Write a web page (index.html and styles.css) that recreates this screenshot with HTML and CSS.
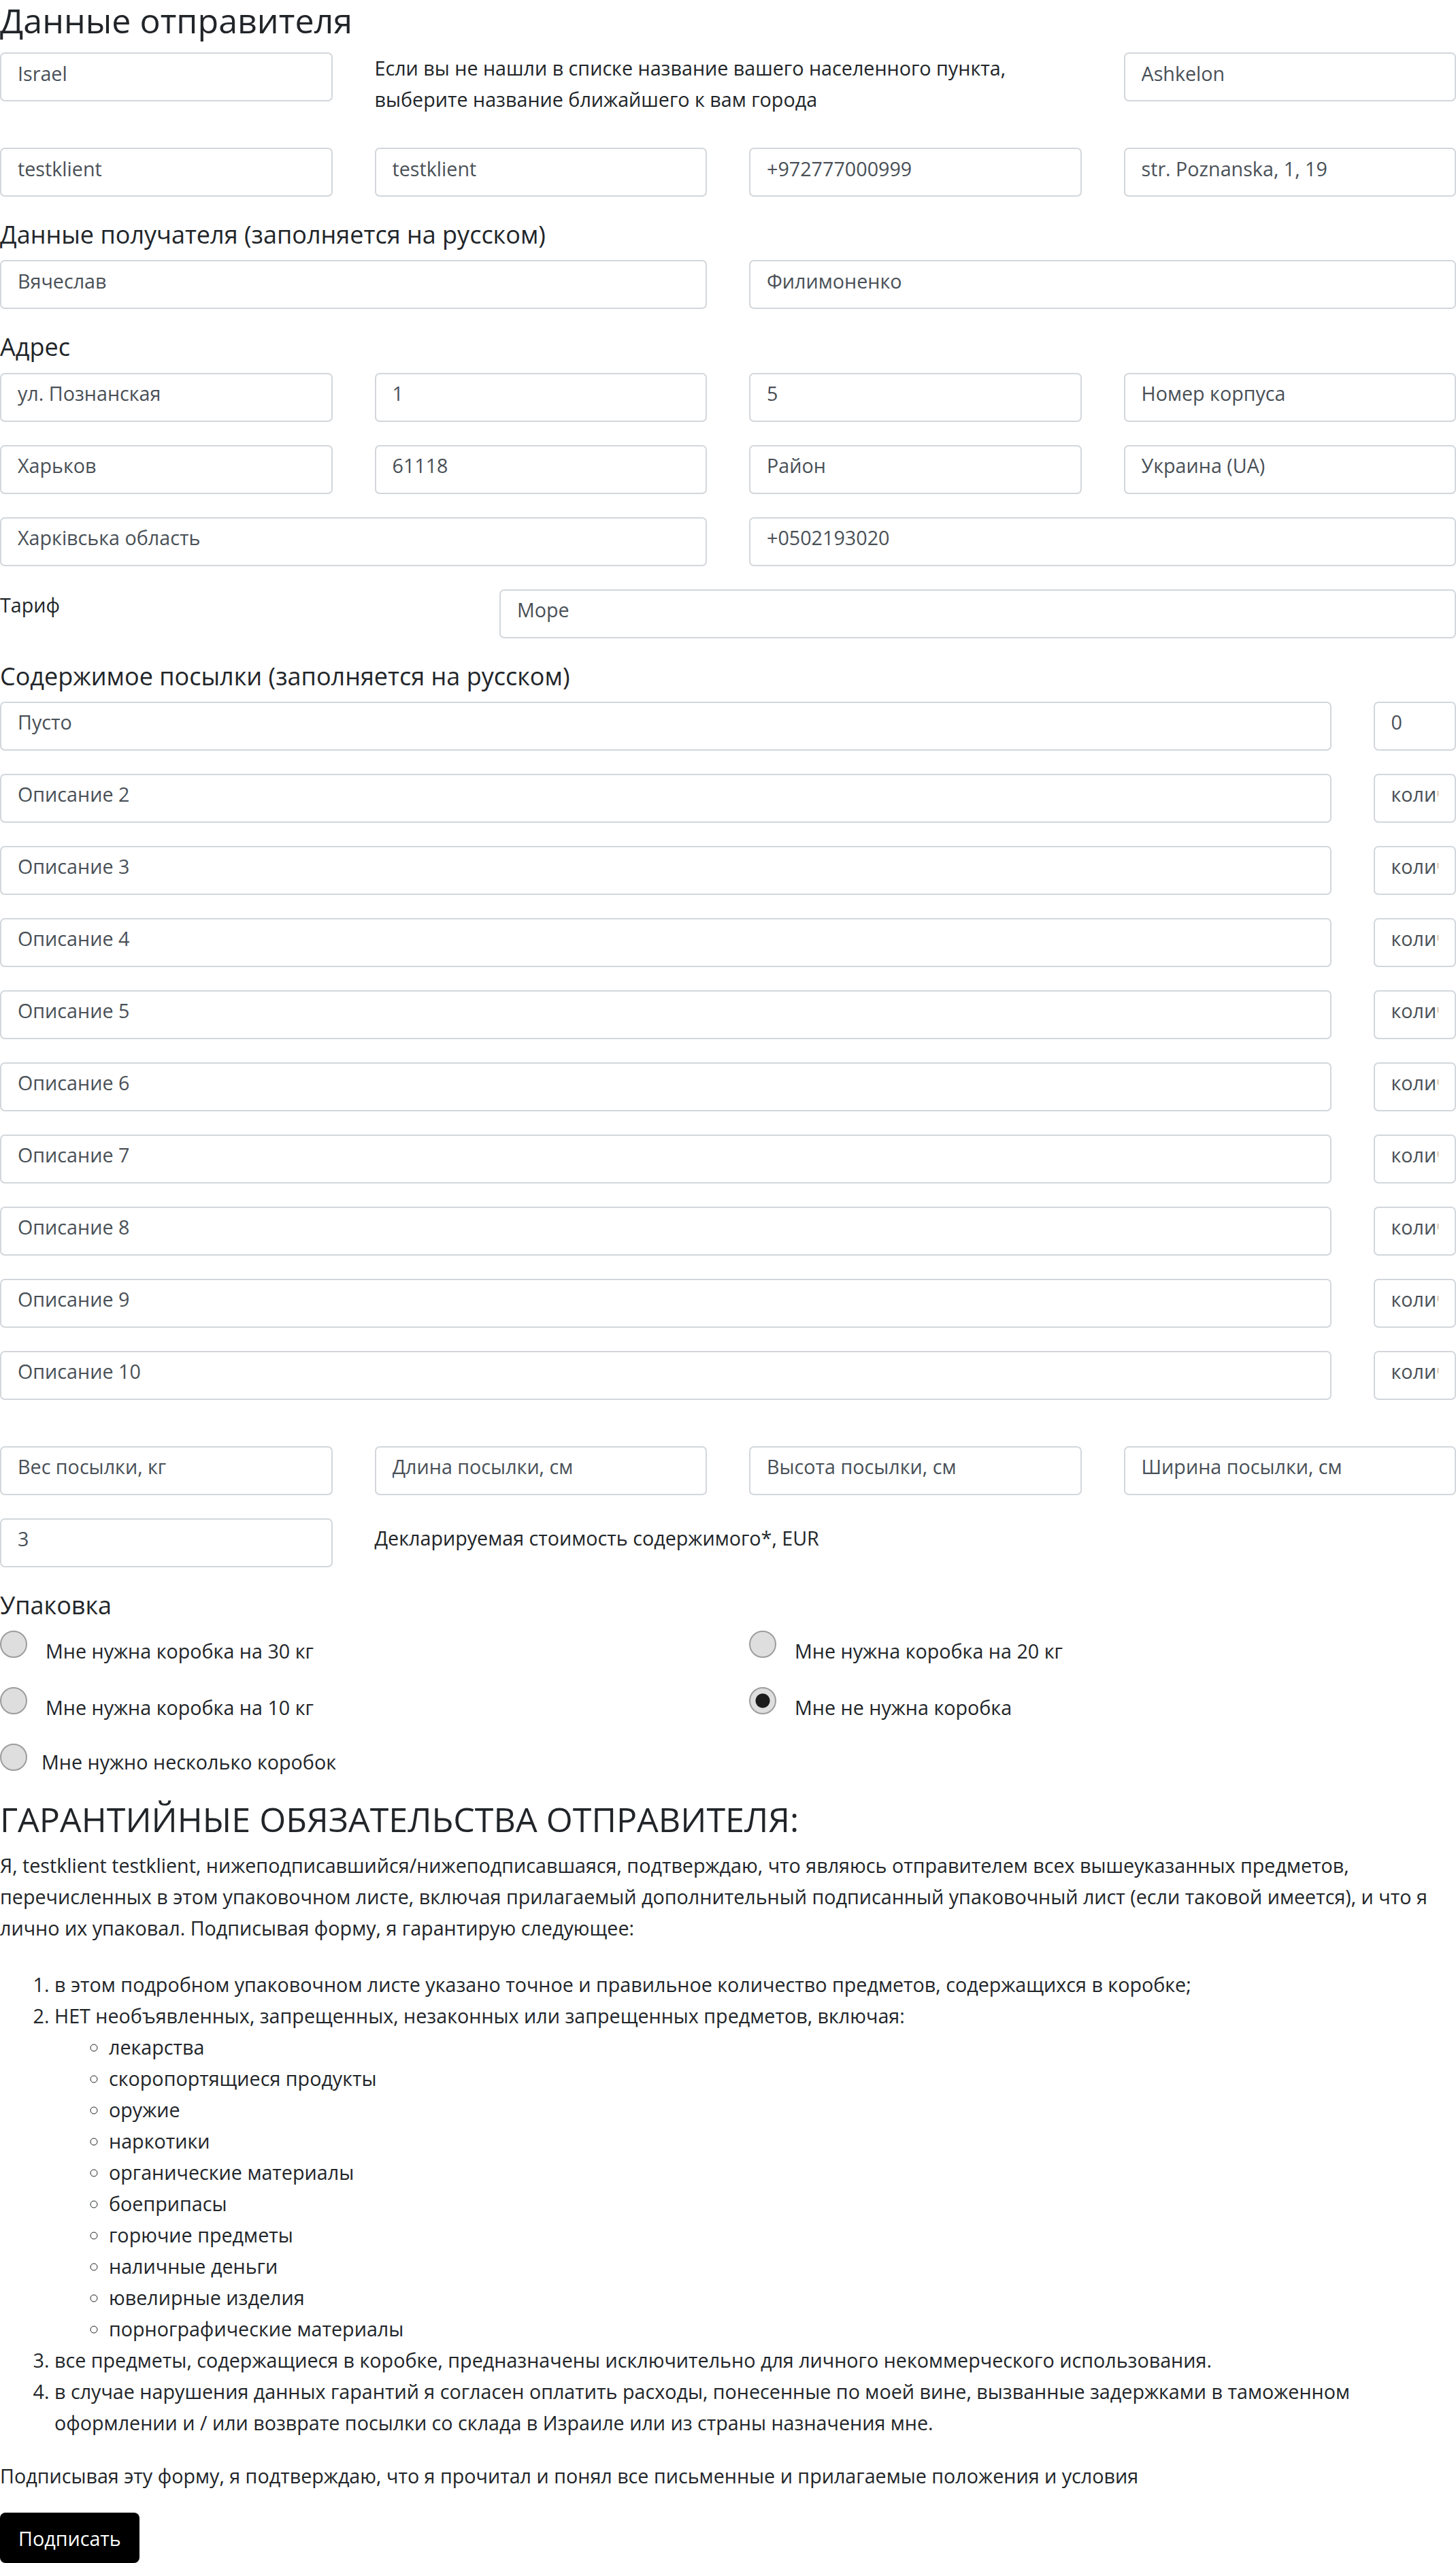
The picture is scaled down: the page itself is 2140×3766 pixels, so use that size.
FILE: index.html
```html
<!DOCTYPE html>
<html lang="ru">
<head>
<meta charset="utf-8">
<title>Данные отправителя</title>
<link rel="stylesheet" href="styles.css">
</head>
<body>
<form class="page">
  <h3 class="title">Данные отправителя</h3>
  <div class="row">
    <input class="fc c3" value="Israel">
    <label class="hint c6">Если вы не нашли в списке название вашего населенного пункта, выберите название ближайшего к вам города</label>
    <input class="fc c3" value="Ashkelon">
  </div>
  <div class="row">
    <input class="fc c3" value="testklient">
    <input class="fc c3" value="testklient">
    <input class="fc c3" value="+972777000999">
    <input class="fc c3" value="str. Poznanska, 1, 19">
  </div>

  <h5 class="subtitle">Данные получателя (заполняется на русском)</h5>
  <div class="row">
    <input class="fc c6" value="Вячеслав">
    <input class="fc c6" value="Филимоненко">
  </div>

  <h5 class="subtitle">Адрес</h5>
  <div class="row">
    <input class="fc c3" value="ул. Познанская">
    <input class="fc c3" value="1">
    <input class="fc c3" value="5">
    <input class="fc c3" placeholder="Номер корпуса">
  </div>
  <div class="row">
    <input class="fc c3" value="Харьков">
    <input class="fc c3" value="61118">
    <input class="fc c3" placeholder="Район">
    <input class="fc c3" value="Украина (UA)">
  </div>
  <div class="row">
    <input class="fc c6" value="Харківська область">
    <input class="fc c6" value="+0502193020">
  </div>
  <div class="row">
    <label class="lbl c4">Тариф</label>
    <input class="fc c8" value="Море">
  </div>

  <h5 class="subtitle">Содержимое посылки (заполняется на русском)</h5>
  <div class="row"><input class="fc c11" value="Пусто"><input class="fc c1" value="0"></div>
  <div class="row"><input class="fc c11" placeholder="Описание 2"><input class="fc c1" placeholder="количество"></div>
  <div class="row"><input class="fc c11" placeholder="Описание 3"><input class="fc c1" placeholder="количество"></div>
  <div class="row"><input class="fc c11" placeholder="Описание 4"><input class="fc c1" placeholder="количество"></div>
  <div class="row"><input class="fc c11" placeholder="Описание 5"><input class="fc c1" placeholder="количество"></div>
  <div class="row"><input class="fc c11" placeholder="Описание 6"><input class="fc c1" placeholder="количество"></div>
  <div class="row"><input class="fc c11" placeholder="Описание 7"><input class="fc c1" placeholder="количество"></div>
  <div class="row"><input class="fc c11" placeholder="Описание 8"><input class="fc c1" placeholder="количество"></div>
  <div class="row"><input class="fc c11" placeholder="Описание 9"><input class="fc c1" placeholder="количество"></div>
  <div class="row"><input class="fc c11" placeholder="Описание 10"><input class="fc c1" placeholder="количество"></div>

  <div class="row spaced">
    <input class="fc c3" placeholder="Вес посылки, кг">
    <input class="fc c3" placeholder="Длина посылки, см">
    <input class="fc c3" placeholder="Высота посылки, см">
    <input class="fc c3" placeholder="Ширина посылки, см">
  </div>
  <div class="row">
    <input class="fc c3" value="3">
    <label class="lbl lbl-pad c9">Декларируемая стоимость содержимого*, EUR</label>
  </div>

  <h5 class="subtitle">Упаковка</h5>
  <div class="radios">
    <label class="radio"><input type="radio" name="box"><span>Мне нужна коробка на 30 кг</span></label>
    <label class="radio"><input type="radio" name="box"><span>Мне нужна коробка на 20 кг</span></label>
    <label class="radio"><input type="radio" name="box"><span>Мне нужна коробка на 10 кг</span></label>
    <label class="radio"><input type="radio" name="box" checked><span>Мне не нужна коробка</span></label>
    <label class="radio radio-tight"><input type="radio" name="box"><span>Мне нужно несколько коробок</span></label>
  </div>

  <h3 class="title title-terms">ГАРАНТИЙНЫЕ ОБЯЗАТЕЛЬСТВА ОТПРАВИТЕЛЯ:</h3>
  <p class="terms">Я, testklient testklient, нижеподписавшийся/нижеподписавшаяся, подтверждаю, что являюсь отправителем всех вышеуказанных предметов, перечисленных в этом упаковочном листе, включая прилагаемый дополнительный подписанный упаковочный лист (если таковой имеется), и что я лично их упаковал. Подписывая форму, я гарантирую следующее:</p>
  <ol class="rules">
    <li>в этом подробном упаковочном листе указано точное и правильное количество предметов, содержащихся в коробке;</li>
    <li>НЕТ необъявленных, запрещенных, незаконных или запрещенных предметов, включая:
      <ul class="banned">
        <li>лекарства</li>
        <li>скоропортящиеся продукты</li>
        <li>оружие</li>
        <li>наркотики</li>
        <li>органические материалы</li>
        <li>боеприпасы</li>
        <li>горючие предметы</li>
        <li>наличные деньги</li>
        <li>ювелирные изделия</li>
        <li>порнографические материалы</li>
      </ul>
    </li>
    <li>все предметы, содержащиеся в коробке, предназначены исключительно для личного некоммерческого использования.</li>
    <li>в случае нарушения данных гарантий я согласен оплатить расходы, понесенные по моей вине, вызванные задержками в таможенном оформлении и / или возврате посылки со склада в Израиле или из страны назначения мне.</li>
  </ol>
  <p class="confirm">Подписывая эту форму, я подтверждаю, что я прочитал и понял все письменные и прилагаемые положения и условия</p>
  <button type="button" class="btn">Подписать</button>
</form>
</body>
</html>
```

FILE: styles.css
```css
html, body {
  margin: 0;
  padding: 0;
  background: #fff;
}
body {
  font-family: "Open Sans", "Noto Sans", sans-serif;
  font-size: 28.7px;
  line-height: 46px;
  color: #212529;
}
.page {
  width: 2140px;
}
.title {
  font-size: 50.2px;
  line-height: 1.2;
  font-weight: 400;
  margin: 0 0 17px;
}
.subtitle {
  font-size: 36px;
  line-height: 1.2;
  font-weight: 400;
  margin: 0 0 16px;
}
.row {
  display: grid;
  grid-template-columns: repeat(12, 1fr);
  column-gap: 62px;
  align-items: start;
  margin-bottom: 34px;
}
.row.spaced {
  margin-top: 68px;
}
.c1 { grid-column: span 1; }
.c3 { grid-column: span 3; }
.c4 { grid-column: span 4; }
.c6 { grid-column: span 6; }
.c8 { grid-column: span 8; }
.c9 { grid-column: span 9; }
.c11 { grid-column: span 11; }

.fc {
  display: block;
  width: 100%;
  min-width: 0;
  height: 72px;
  box-sizing: border-box;
  padding: 0 24px 12px;
  font-family: inherit;
  font-size: 28.7px;
  color: #495057;
  background: #fff;
  border: 2px solid #d3d7db;
  border-radius: 7px;
  outline: none;
}
.fc::placeholder {
  color: #495057;
  opacity: 1;
}
.hint {
  margin-bottom: 14px;
}
.lbl-pad {
  padding-top: 6px;
}

.radios {
  display: grid;
  grid-template-columns: 1fr 1fr;
  column-gap: 62px;
  row-gap: 30px;
  margin-bottom: 31px;
}
.radio {
  display: flex;
  align-items: flex-start;
  gap: 27px;
}
.radio-tight {
  gap: 21px;
}
.radio span {
  padding-top: 7px;
  line-height: 46px;
}
.radio-tight span {
  padding-top: 4px;
}
.radio input {
  appearance: none;
  -webkit-appearance: none;
  flex: none;
  width: 40px;
  height: 40px;
  margin: 0;
  box-sizing: border-box;
  border: 2px solid #9d9d9d;
  border-radius: 50%;
  background: #dedede;
}
.radio input:checked {
  background: radial-gradient(circle, #1c1c1c 0 10px, #dedede 11px);
}

.title-terms {
  margin-bottom: 15px;
}
.terms {
  margin: 0 0 37px;
}
.rules {
  margin: 0 0 32px;
  padding-left: 80px;
}
.banned {
  list-style-type: circle;
  margin: 0;
  padding-left: 80px;
}
.confirm {
  margin: 0 0 31px;
}
.btn {
  display: block;
  height: 74px;
  padding: 0 27px;
  font-family: inherit;
  font-size: 28.7px;
  color: #fff;
  background: #000;
  border: 0;
  border-radius: 8px;
}
```
